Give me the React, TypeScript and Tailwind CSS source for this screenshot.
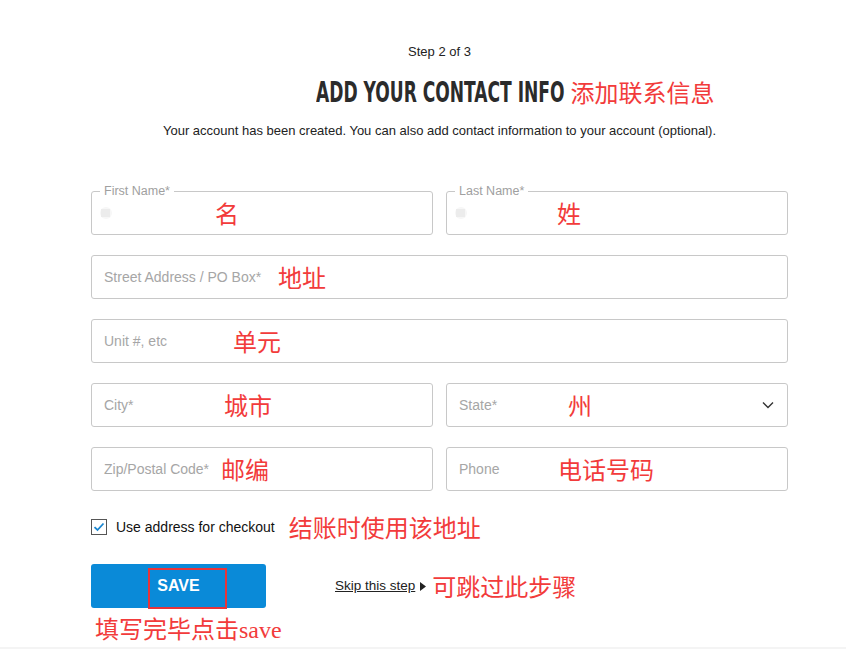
import React from "react";

const red = "text-[#f23b3b]";
const cjk = { fontFamily: '"Noto Sans CJK SC", sans-serif' };

function Note({ text, left, className = "" }: { text: string; left: number; className?: string }) {
  return (
    <span
      className={`absolute top-1/2 -translate-y-1/2 text-[24px] leading-none ${red} ${className}`}
      style={{ ...cjk, left }}
    >
      {text}
    </span>
  );
}

function Field({
  placeholder,
  note,
  noteLeft,
  floating,
  select,
  className = "",
}: {
  placeholder: string;
  note: string;
  noteLeft: number;
  floating?: boolean;
  select?: boolean;
  className?: string;
}) {
  return (
    <div className={`relative h-[44px] rounded-[3px] border border-[#c8c8c8] bg-white ${className}`}>
      {floating ? (
        <>
          <span className="absolute -top-[8px] left-[8px] bg-white px-[4px] text-[12.5px] leading-[14px] text-[#a0a0a0]">
            {placeholder}
          </span>
          <span className="absolute left-[8px] top-[15px] h-[12px] w-[12px] rounded-full bg-[#f7f7f7]" />
          <span className="absolute left-[9px] top-[17px] h-[8px] w-[9px] bg-[#ececec]" />
        </>
      ) : (
        <span className="absolute left-[12px] top-1/2 -translate-y-1/2 text-[14px] text-[#a6a6a6]">{placeholder}</span>
      )}
      {select && (
        <svg className="absolute right-[13px] top-1/2 -translate-y-1/2" width="12" height="8" viewBox="0 0 12 8">
          <path d="M1 1.5 L6 6.5 L11 1.5" fill="none" stroke="#333" strokeWidth="1.4" />
        </svg>
      )}
      <Note text={note} left={noteLeft} />
    </div>
  );
}

export default function App() {
  return (
    <div
      className="relative min-h-[649px] w-[846px] bg-white text-[#222]"
      style={{ fontFamily: '"Liberation Sans", Arial, sans-serif' }}
    >
      <div className="ml-[91px] flex w-[697px] flex-col">
        <div className="pt-[44px] text-center text-[13px] leading-[16px] text-[#222]">Step 2 of 3</div>
        <div className="relative mt-[16px] flex justify-center">
          <div className="relative h-[32px] w-[248px]">
            <h1
              className="absolute left-0 top-0 origin-left scale-x-[0.655] whitespace-nowrap text-[29px] font-bold leading-[32px] text-[#2b2b2b]"
              style={{ fontFamily: '"DejaVu Sans Condensed", "Liberation Sans", sans-serif' }}
            >
              ADD YOUR CONTACT INFO
            </h1>
            <span
              className={`absolute left-[calc(100%+7px)] top-1/2 -translate-y-1/2 whitespace-nowrap text-[24px] leading-none ${red}`}
              style={cjk}
            >
              添加联系信息
            </span>
          </div>
        </div>
        <div className="mt-[15px] text-center text-[13px] leading-[16px] text-[#222]">
          Your account has been created. You can also add contact information to your account (optional).
        </div>

        <div className="mt-[52px] grid grid-cols-2 gap-x-[13px] gap-y-[20px]">
          <Field placeholder="First Name*" note="名" noteLeft={123} floating />
          <Field placeholder="Last Name*" note="姓" noteLeft={110} floating />
          <Field placeholder="Street Address / PO Box*" note="地址" noteLeft={186} className="col-span-2" />
          <Field placeholder="Unit #, etc" note="单元" noteLeft={141} className="col-span-2" />
          <Field placeholder="City*" note="城市" noteLeft={132} />
          <Field placeholder="State*" note="州" noteLeft={121} select />
          <Field placeholder="Zip/Postal Code*" note="邮编" noteLeft={129} />
          <Field placeholder="Phone" note="电话号码" noteLeft={111} />
        </div>

        <div className="mt-[24px] flex items-center">
          <span className="flex h-[16px] w-[16px] items-center justify-center border border-[#555] bg-white">
            <svg width="12" height="10" viewBox="0 0 12 10">
              <path d="M1.5 5.2 L4.5 8 L10.5 1.5" fill="none" stroke="#1a86d0" strokeWidth="1.8" />
            </svg>
          </span>
          <span className="ml-[9px] text-[14px] text-[#111]">Use address for checkout</span>
          <span className={`ml-[14px] text-[24px] leading-none ${red}`} style={cjk}>
            结账时使用该地址
          </span>
        </div>

        <div className="mt-[25px] flex items-center">
          <div className="relative flex h-[44px] w-[175px] items-center justify-center rounded-[3px] bg-[#0a8ad8]">
            <span className="text-[16px] font-bold text-white">SAVE</span>
            <span className="absolute left-[57px] top-[4px] h-[41px] w-[79px] border-2 border-[#e8343a]" />
          </div>
          <a className="ml-[69px] text-[13.5px] text-[#222] underline">Skip this step</a>
          <svg className="ml-[5px]" width="6" height="9" viewBox="0 0 6 9">
            <path d="M0 0 L6 4.5 L0 9 Z" fill="#222" />
          </svg>
          <span className={`ml-[6px] text-[24px] leading-none ${red}`} style={cjk}>
            可跳过此步骤
          </span>
        </div>

        <div className={`ml-[4px] mt-[6px] text-[24px] leading-[28px] ${red}`} style={cjk}>
          填写完毕点击<span style={{ fontFamily: '"Liberation Serif", serif' }}>save</span>
        </div>
      </div>
      <div className="absolute bottom-0 left-0 h-[2px] w-full bg-[#f4f4f4]" />
    </div>
  );
}
